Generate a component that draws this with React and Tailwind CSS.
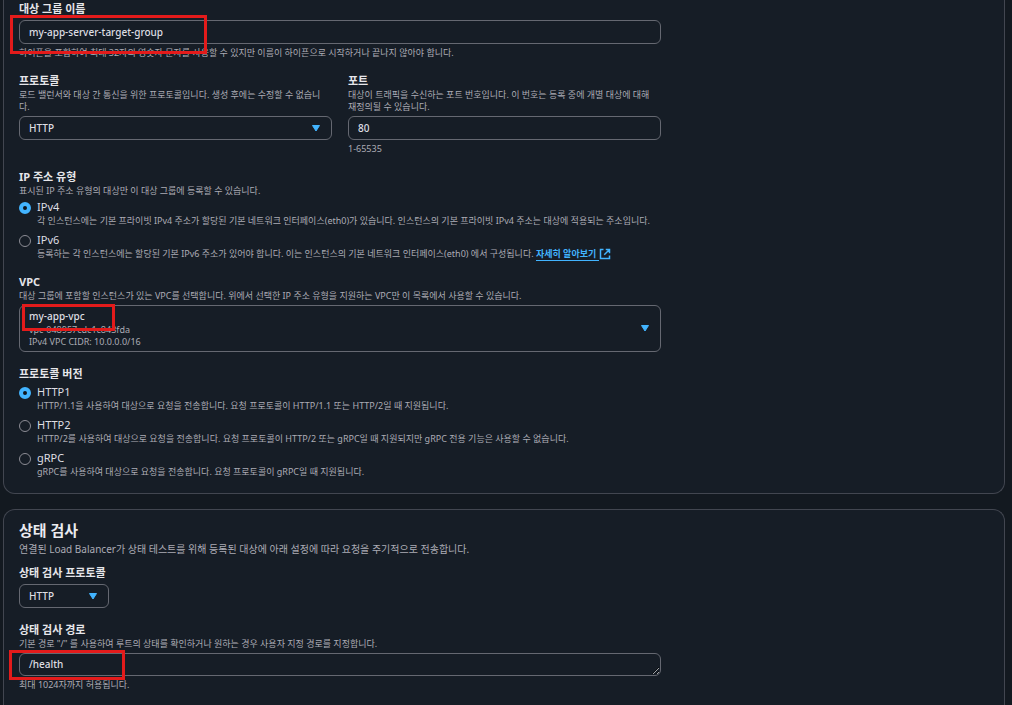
import React, { useId, useState } from "react";

function Caret({ className = "" }) {
  return (
    <svg aria-hidden="true" viewBox="0 0 8 7" className={`pointer-events-none h-[7px] w-[8px] ${className}`}>
      <path d="M0.5 0.5h7L4 6z" fill="#42b4ff" stroke="#42b4ff" strokeLinejoin="round" />
    </svg>
  );
}

function Field({ label, description, hint, htmlFor, children }) {
  return (
    <div className="min-w-0">
      <label htmlFor={htmlFor} className="block pb-[2px] text-[11px] leading-[13px] font-bold text-[#e6e6ea]">
        {label}
      </label>
      {description && <p className="pr-1 text-[9px] leading-[12px] text-[#acacb5]">{description}</p>}
      <div className="relative mt-[3px]">{children}</div>
      {hint && <p className="mt-[3px] text-[9px] leading-[12px] text-[#acacb5]">{hint}</p>}
    </div>
  );
}

function Highlight({ className }) {
  return <span aria-hidden="true" className={`pointer-events-none absolute border-3 border-[#e31b1b] ${className}`} />;
}

function TextInput({ id, value }) {
  return (
    <input
      id={id}
      type="text"
      defaultValue={value}
      className="block h-6 w-full rounded-md border border-[#656871] bg-[#161d26] px-[9px] text-[10px] font-medium text-[#dedee3] outline-none"
    />
  );
}

function SelectInput({ id, options, className = "", caretClass }) {
  return (
    <div className={`relative ${className}`}>
      <select
        id={id}
        className="block h-6 w-full appearance-none rounded-md border border-[#656871] bg-[#161d26] px-[9px] text-[10px] font-medium text-[#dedee3] outline-none"
      >
        {options.map((o) => (
          <option key={o}>{o}</option>
        ))}
      </select>
      <Caret className={`absolute top-[9px] ${caretClass}`} />
    </div>
  );
}

function RadioGroup({ name, label, description, options }) {
  const base = useId();
  const [selected, setSelected] = useState(options[0].value);
  return (
    <fieldset className="min-w-0">
      <legend className="pb-[2px] text-[11px] leading-[13px] font-bold text-[#e6e6ea]">{label}</legend>
      {description && <p className="text-[9px] leading-[12px] text-[#acacb5]">{description}</p>}
      <div className="mt-[3px] flex flex-col gap-[6px]">
        {options.map((o) => (
          <div key={o.value} className="flex items-start gap-[6px]">
            <input
              id={base + o.value}
              type="radio"
              name={name}
              checked={selected === o.value}
              onChange={() => setSelected(o.value)}
              className="mt-[2px] size-3 shrink-0 appearance-none rounded-full border border-[#8c8c94] bg-[#161d26] checked:border-4 checked:border-[#42b4ff] checked:bg-[#0f141a]"
            />
            <div>
              <label htmlFor={base + o.value} className="block pb-[2px] text-[11px] leading-[13px] text-[#dedee3]">
                {o.value}
              </label>
              <p className="text-[9px] leading-[12px] text-[#acacb5]">{o.text}</p>
            </div>
          </div>
        ))}
      </div>
    </fieldset>
  );
}

function ExternalIcon() {
  return (
    <svg aria-hidden="true" viewBox="0 0 16 16" className="inline-block size-[12px] align-[-3px]" fill="none" stroke="#42b4ff" strokeWidth="2">
      <path d="M6 2H2v12h12v-4M9 2h5v5M14 2L7 9" />
    </svg>
  );
}

const ipTypes = [
  {
    value: "IPv4",
    text: "각 인스턴스에는 기본 프라이빗 IPv4 주소가 할당된 기본 네트워크 인터페이스(eth0)가 있습니다. 인스턴스의 기본 프라이빗 IPv4 주소는 대상에 적용되는 주소입니다.",
  },
  {
    value: "IPv6",
    text: (
      <>
        등록하는 각 인스턴스에는 할당된 기본 IPv6 주소가 있어야 합니다. 이는 인스턴스의 기본 네트워크 인터페이스(eth0) 에서 구성됩니다.{" "}
        <a href="#learn-more" className="font-bold text-[#42b4ff]">
          <span className="border-b border-[#42b4ff] pr-[3px]">자세히 알아보기</span>
          <ExternalIcon />
        </a>
      </>
    ),
  },
];

const versions = [
  { value: "HTTP1", text: "HTTP/1.1을 사용하여 대상으로 요청을 전송합니다. 요청 프로토콜이 HTTP/1.1 또는 HTTP/2일 때 지원됩니다." },
  { value: "HTTP2", text: "HTTP/2를 사용하여 대상으로 요청을 전송합니다. 요청 프로토콜이 HTTP/2 또는 gRPC일 때 지원되지만 gRPC 전용 기능은 사용할 수 없습니다." },
  { value: "gRPC", text: "gRPC를 사용하여 대상으로 요청을 전송합니다. 요청 프로토콜이 gRPC일 때 지원됩니다." },
];

export default function App() {
  return (
    <main
      lang="ko"
      className="flex min-h-screen flex-col gap-[15px] bg-[#131920] pr-[7px] pl-[3px] font-['Noto_Sans','Noto_Sans_CJK_KR',sans-serif]"
    >
      <section className="rounded-b-xl border border-t-0 border-[#424650] bg-[#161d26] px-[15px] pt-[2px] pb-[15px]">
        <div className="flex max-w-[642px] flex-col gap-[15px]">
          <Field
            label="대상 그룹 이름"
            htmlFor="group-name"
            hint="하이픈을 포함하여 최대 32자의 영숫자 문자를 사용할 수 있지만 이름이 하이픈으로 시작하거나 끝나지 않아야 합니다."
          >
            <TextInput id="group-name" value="my-app-server-target-group" />
            <Highlight className="-top-[5px] -left-[9px] h-[39px] w-[197px]" />
          </Field>

          <div className="grid grid-cols-2 gap-4">
            <Field
              label="프로토콜"
              htmlFor="protocol"
              description="로드 밸런서와 대상 간 통신을 위한 프로토콜입니다. 생성 후에는 수정할 수 없습니다."
            >
              <SelectInput id="protocol" options={["HTTP", "HTTPS", "TCP"]} caretClass="right-[12px]" />
            </Field>
            <Field
              label="포트"
              htmlFor="port"
              description="대상이 트래픽을 수신하는 포트 번호입니다. 이 번호는 등록 중에 개별 대상에 대해 재정의될 수 있습니다."
              hint="1-65535"
            >
              <TextInput id="port" value="80" />
            </Field>
          </div>

          <RadioGroup
            name="ip-type"
            label="IP 주소 유형"
            description="표시된 IP 주소 유형의 대상만 이 대상 그룹에 등록할 수 있습니다."
            options={ipTypes}
          />

          <Field
            label="VPC"
            htmlFor="vpc"
            description="대상 그룹에 포함할 인스턴스가 있는 VPC를 선택합니다. 위에서 선택한 IP 주소 유형을 지원하는 VPC만 이 목록에서 사용할 수 있습니다."
          >
            <button
              id="vpc"
              type="button"
              aria-haspopup="listbox"
              className="flex w-full items-center justify-between rounded-md border border-[#656871] bg-[#161d26] py-[3px] pr-[11px] pl-[9px] text-left"
            >
              <span className="flex flex-col text-[9px] leading-[12px] text-[#acacb5]">
                <span className="text-[10px] leading-[15px] font-medium text-[#dedee3]">my-app-vpc</span>
                <span>vpc-048957cdc1c843fda</span>
                <span>IPv4 VPC CIDR: 10.0.0.0/16</span>
              </span>
              <Caret />
            </button>
            <Highlight className="-top-px left-[3px] h-[27px] w-[93px]" />
          </Field>

          <RadioGroup name="version" label="프로토콜 버전" options={versions} />
        </div>
      </section>

      <section className="flex-1 rounded-t-xl border border-b-0 border-[#424650] bg-[#161d26] px-[15px] pt-[10px]">
        <h2 className="text-[15px] leading-[20px] font-bold text-[#ebebf0]">상태 검사</h2>
        <p className="mt-[2px] text-[10px] leading-[15px] text-[#acacb5]">
          연결된 Load Balancer가 상태 테스트를 위해 등록된 대상에 아래 설정에 따라 요청을 주기적으로 전송합니다.
        </p>
        <div className="mt-[9px] flex max-w-[642px] flex-col gap-[15px]">
          <Field label="상태 검사 프로토콜" htmlFor="health-protocol">
            <SelectInput id="health-protocol" options={["HTTP", "HTTPS"]} className="w-[90px]" caretClass="right-[12px]" />
          </Field>
          <Field
            label="상태 검사 경로"
            htmlFor="health-path"
            description={'기본 경로 "/" 를 사용하여 루트의 상태를 확인하거나 원하는 경우 사용자 지정 경로를 지정합니다.'}
            hint="최대 1024자까지 허용됩니다."
          >
            <textarea
              id="health-path"
              rows={1}
              defaultValue="/health"
              className="block h-[23px] w-full resize overflow-hidden rounded-md border border-[#656871] bg-[#161d26] px-[9px] py-[3px] text-[10px] leading-[15px] font-medium text-[#dedee3] outline-none"
            />
            <Highlight className="-top-[3px] -left-[10px] h-[30px] w-[116px]" />
          </Field>
        </div>
      </section>
    </main>
  );
}
